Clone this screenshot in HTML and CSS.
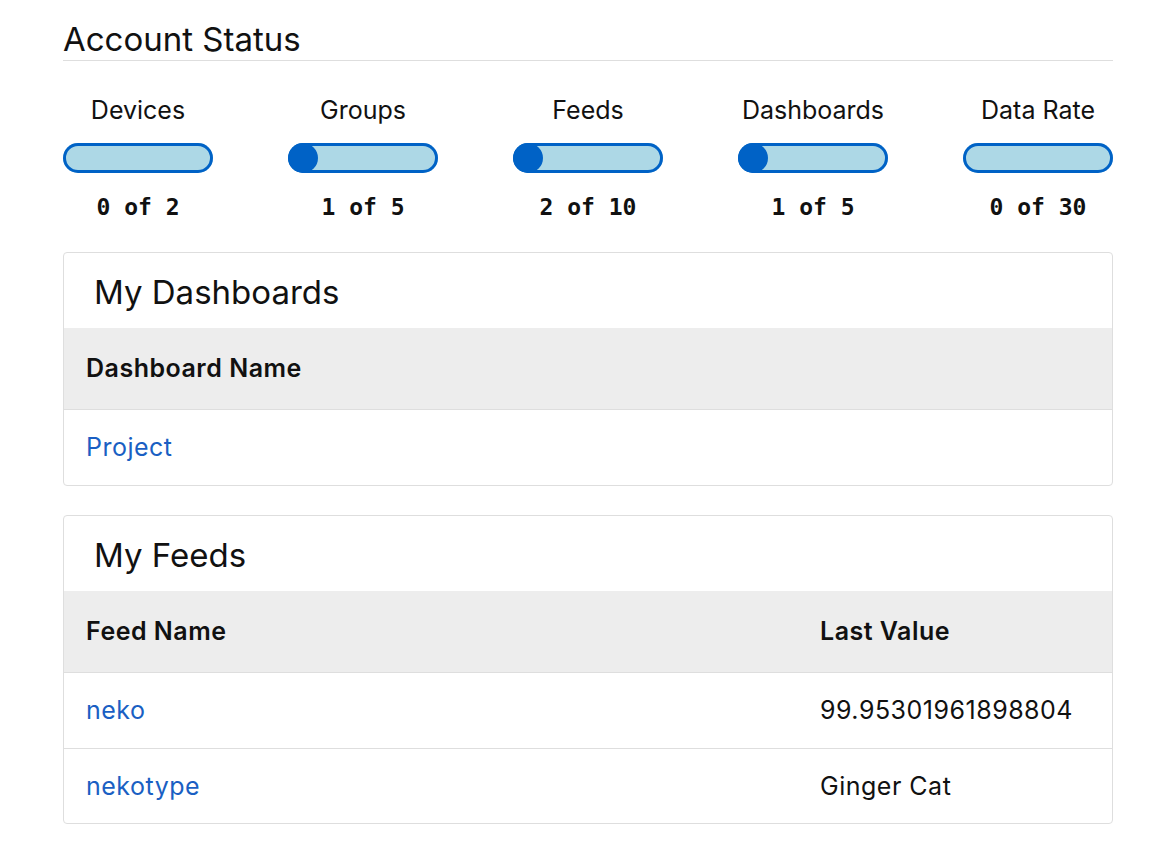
FILE: index.html
```html
<!DOCTYPE html>
<html>
<head>
<meta charset="utf-8">
<link rel="stylesheet" href="styles.css">
</head>
<body>
<div class="page">
  <h1 class="title">Account Status</h1>
  <div class="stats">
    <div class="stat">
      <div class="stat-label">Devices</div>
      <div class="bar"><div class="fill" style="width:0%"></div></div>
      <div class="stat-count">0 of 2</div>
    </div>
    <div class="stat">
      <div class="stat-label">Groups</div>
      <div class="bar"><div class="fill" style="width:20%"></div></div>
      <div class="stat-count">1 of 5</div>
    </div>
    <div class="stat">
      <div class="stat-label">Feeds</div>
      <div class="bar"><div class="fill" style="width:20%"></div></div>
      <div class="stat-count">2 of 10</div>
    </div>
    <div class="stat">
      <div class="stat-label">Dashboards</div>
      <div class="bar"><div class="fill" style="width:20%"></div></div>
      <div class="stat-count">1 of 5</div>
    </div>
    <div class="stat">
      <div class="stat-label">Data Rate</div>
      <div class="bar"><div class="fill" style="width:0%"></div></div>
      <div class="stat-count">0 of 30</div>
    </div>
  </div>

  <div class="card">
    <h2 class="card-title">My Dashboards</h2>
    <table class="tbl">
      <thead><tr><th>Dashboard Name</th></tr></thead>
      <tbody><tr><td><a href="#">Project</a></td></tr></tbody>
    </table>
  </div>

  <div class="card">
    <h2 class="card-title">My Feeds</h2>
    <table class="tbl">
      <thead><tr><th>Feed Name</th><th class="col-val">Last Value</th></tr></thead>
      <tbody>
        <tr><td><a href="#">neko</a></td><td class="col-val">99.95301961898804</td></tr>
        <tr><td><a href="#">nekotype</a></td><td class="col-val">Ginger Cat</td></tr>
      </tbody>
    </table>
  </div>
</div>
</body>
</html>
```

FILE: styles.css
```css
* { box-sizing: border-box; }
body {
  margin: 0;
  background: #fff;
  color: #111;
  font-family: "Inter", "Liberation Sans", sans-serif;
}
.page {
  width: 1050px;
  margin-left: 63px;
  padding-top: 19px;
}
.title {
  margin: 0;
  font-size: 33px;
  font-weight: 400;
  line-height: 40px;
  padding-bottom: 1px;
  border-bottom: 1px solid #dedede;
}
.stats {
  display: flex;
  justify-content: space-between;
  padding-top: 34px;
}
.stat {
  width: 150px;
  display: flex;
  flex-direction: column;
  align-items: center;
}
.stat-label {
  font-size: 25px;
  line-height: 30px;
  white-space: nowrap;
}
.bar {
  margin-top: 18px;
  width: 150px;
  height: 30px;
  border-radius: 15px;
  background: #add8e6;
  box-shadow: inset 0 0 0 3px #0062c6;
  overflow: hidden;
}
.fill {
  height: 100%;
  background: #0062c6;
  border-radius: 15px;
}
.stat-count {
  margin-top: 20px;
  font-family: "DejaVu Sans Mono", "Liberation Mono", monospace;
  font-weight: bold;
  font-size: 23px;
  line-height: 28px;
}
.card {
  margin-top: 29px;
  border: 1px solid #dedede;
  border-radius: 4px;
  overflow: hidden;
}
.stats + .card { margin-top: 31px; }
.card-title {
  margin: 0;
  font-size: 33px;
  font-weight: 400;
  line-height: 40px;
  padding: 19px 30px 16px;
}
.tbl {
  width: 100%;
  border-collapse: collapse;
  font-size: 25px;
  letter-spacing: 0.5px;
}
.tbl th {
  text-align: left;
  font-weight: 600;
  background: #ededed;
  height: 81px;
  padding: 0 22px;
}
.tbl td {
  height: 75px;
  padding: 0 22px;
  border-top: 1px solid #dedede;
}
.tbl tbody tr:first-child td { height: 76px; }
.tbl th.col-val, .tbl td.col-val { width: 292px; padding-left: 0; }
.tbl a {
  color: #1a5fc3;
  text-decoration: none;
}
```
